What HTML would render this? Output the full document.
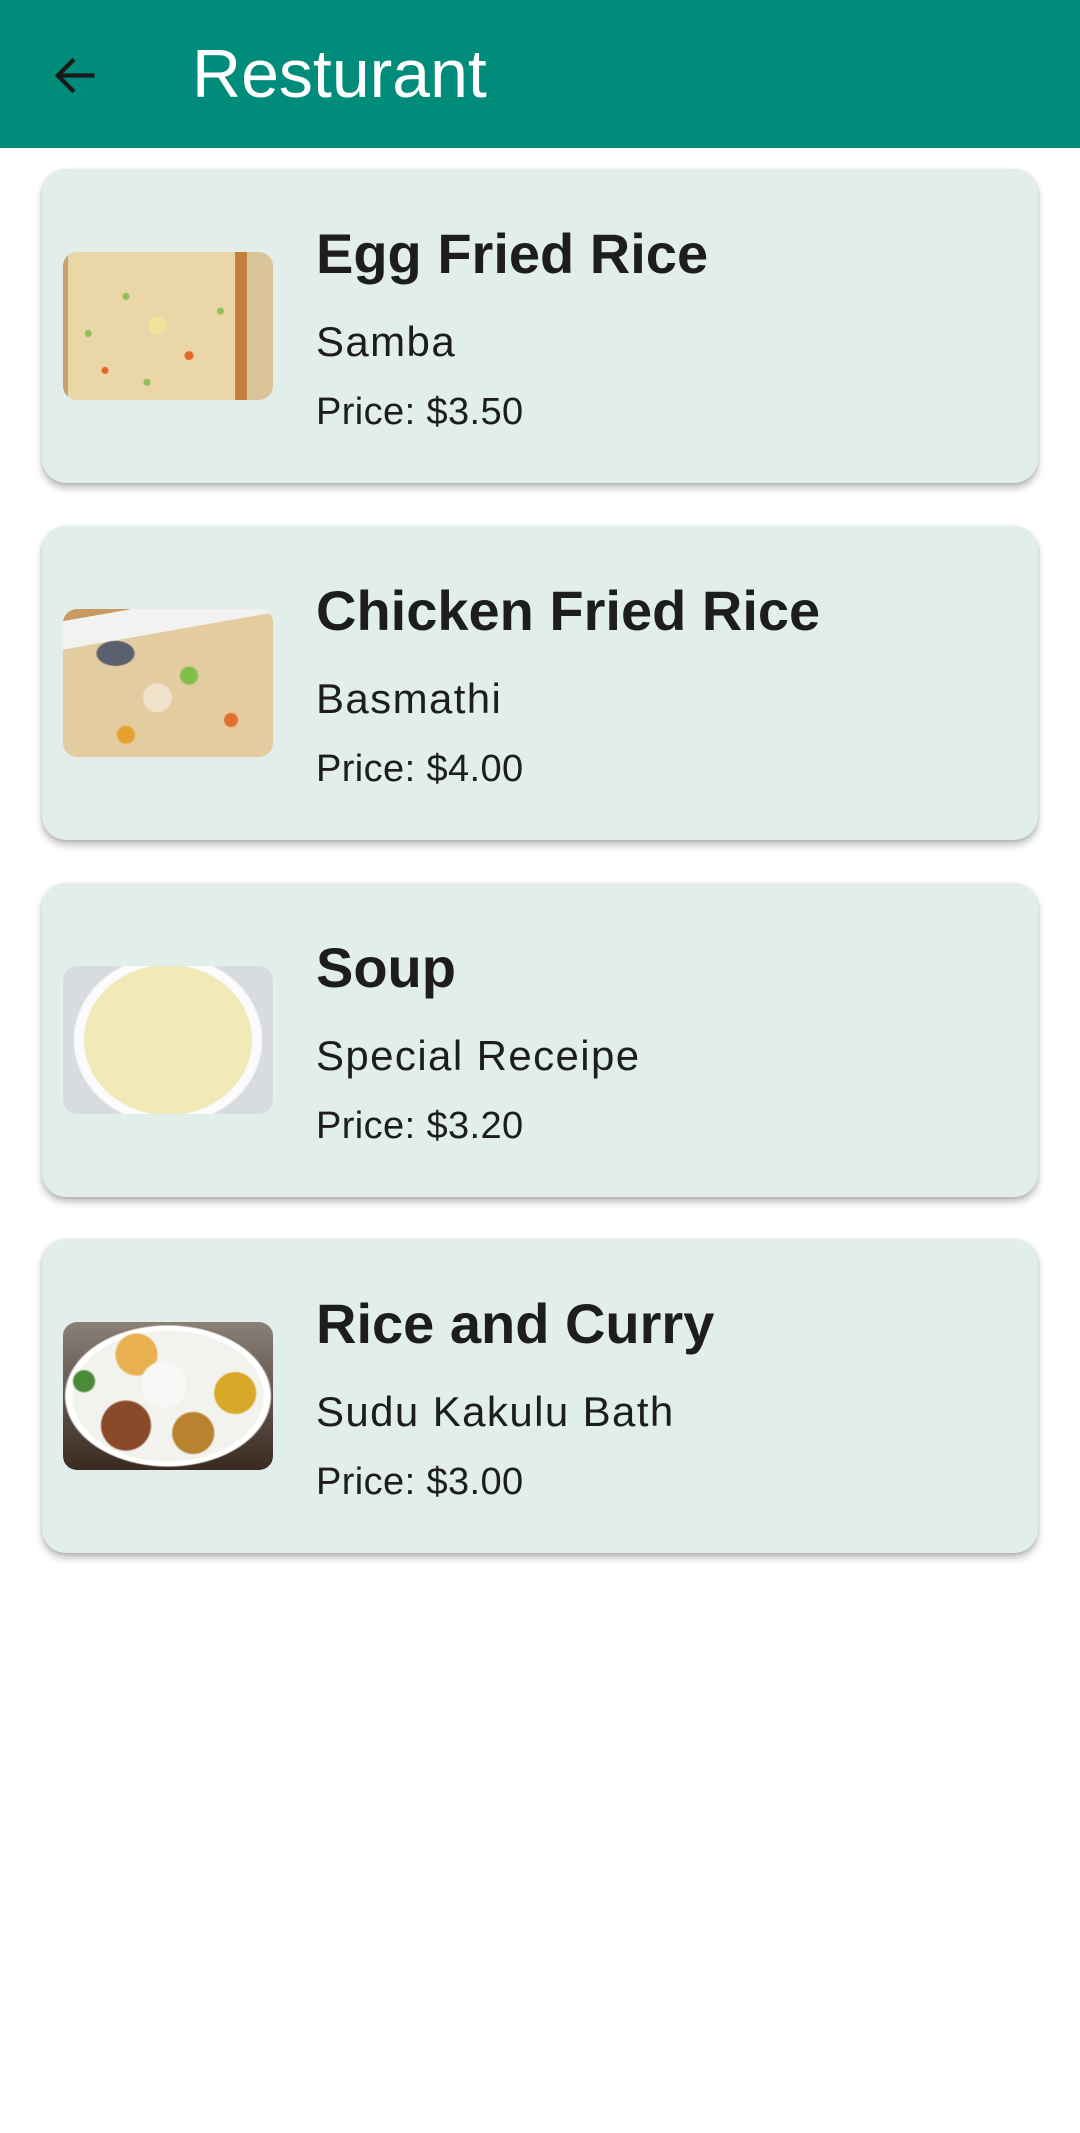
<!DOCTYPE html>
<html><head><meta charset="utf-8"><style>
*{margin:0;padding:0;box-sizing:border-box}
body{width:1080px;height:2133px;background:#fff;font-family:"Liberation Sans",sans-serif;position:relative;overflow:hidden}
.bar{position:absolute;left:0;top:0;width:1080px;height:148px;background:#008c7a}
.bar .t{position:absolute;left:192px;top:40px;font-size:68px;line-height:1;color:#fff}
.card{position:absolute;left:42px;width:996px;height:314px;background:#e2eeea;border-radius:24px;box-shadow:0 5px 8px rgba(0,0,0,.25),0 1px 3px rgba(0,0,0,.12)}
.img{position:absolute;left:21px;top:83px;width:210px;height:148px;border-radius:14px;overflow:hidden}
.n{position:absolute;left:274px;top:57px;font-size:56px;font-weight:bold;line-height:1;color:#1c1d1c}
.s{position:absolute;left:274px;top:152px;font-size:42px;line-height:1;color:#1c1d1c;letter-spacing:1.4px}
.p{position:absolute;left:274px;top:224px;font-size:38px;line-height:1;color:#1c1d1c;letter-spacing:.4px}
</style></head><body>
<div class="bar">
<svg style="position:absolute;left:42px;top:44px" width="63" height="63" viewBox="0 0 24 24"><path d="M20 12H6.5M12.2 5.8L6 12l6.2 6.2" fill="none" stroke="#1a1a1a" stroke-width="1.6"/></svg>
<div class="t">Resturant</div>
</div>

<div class="card" style="top:169px">
<div class="img" style="background:radial-gradient(circle at 30% 30%,#8fc05a 0 3px,transparent 4px),radial-gradient(circle at 60% 70%,#e06a2a 0 4px,transparent 5px),radial-gradient(circle at 20% 80%,#e06a2a 0 3px,transparent 4px),radial-gradient(circle at 75% 40%,#8fc05a 0 3px,transparent 4px),radial-gradient(circle at 45% 50%,#f3e39a 0 8px,transparent 10px),radial-gradient(circle at 12% 55%,#8fc05a 0 3px,transparent 4px),radial-gradient(circle at 40% 88%,#8fc05a 0 3px,transparent 4px),linear-gradient(90deg,#c9a070 0 5px,#ead6a6 5px 172px,#c4813e 172px 184px,#dcc49a 184px);"></div>
<div class="n">Egg Fried Rice</div><div class="s">Samba</div><div class="p">Price: $3.50</div>
</div>

<div class="card" style="top:526px">
<div class="img" style="background:radial-gradient(ellipse at 25% 30%,#5a6070 0 18px,transparent 20px),radial-gradient(circle at 45% 60%,#f1e2cc 0 14px,transparent 15px),radial-gradient(circle at 60% 45%,#7fbf4a 0 8px,transparent 10px),radial-gradient(circle at 80% 75%,#e0702a 0 6px,transparent 8px),radial-gradient(circle at 30% 85%,#e8a030 0 8px,transparent 10px),linear-gradient(170deg,#c69a62 0 12px,#f2f2f0 12px 40px,#e3cc9f 40px);"></div>
<div class="n">Chicken Fried Rice</div><div class="s">Basmathi</div><div class="p">Price: $4.00</div>
</div>

<div class="card" style="top:883px">
<div class="img" style="background:radial-gradient(ellipse 95px 85px at 50% 50%,#f1eab8 0 88%,#fbfbfb 89% 98%,#d8dbe0 100%);"></div>
<div class="n">Soup</div><div class="s">Special Receipe</div><div class="p">Price: $3.20</div>
</div>

<div class="card" style="top:1239px">
<div class="img" style="background:radial-gradient(circle at 48% 42%,#f8f8f6 0 22px,transparent 24px),radial-gradient(circle at 35% 22%,#e8b050 0 20px,transparent 22px),radial-gradient(circle at 82% 48%,#d8a828 0 20px,transparent 22px),radial-gradient(circle at 10% 40%,#4a8a3a 0 10px,transparent 12px),radial-gradient(circle at 30% 70%,#8a4a2a 0 24px,transparent 26px),radial-gradient(circle at 62% 75%,#b8822e 0 20px,transparent 22px),radial-gradient(ellipse 105px 72px at 50% 50%,#f2f2ef 0 90%,#fff 92% 97%,transparent 99%),linear-gradient(#8a8078,#3a2a22);"></div>
<div class="n">Rice and Curry</div><div class="s">Sudu Kakulu Bath</div><div class="p">Price: $3.00</div>
</div>
</body></html>
